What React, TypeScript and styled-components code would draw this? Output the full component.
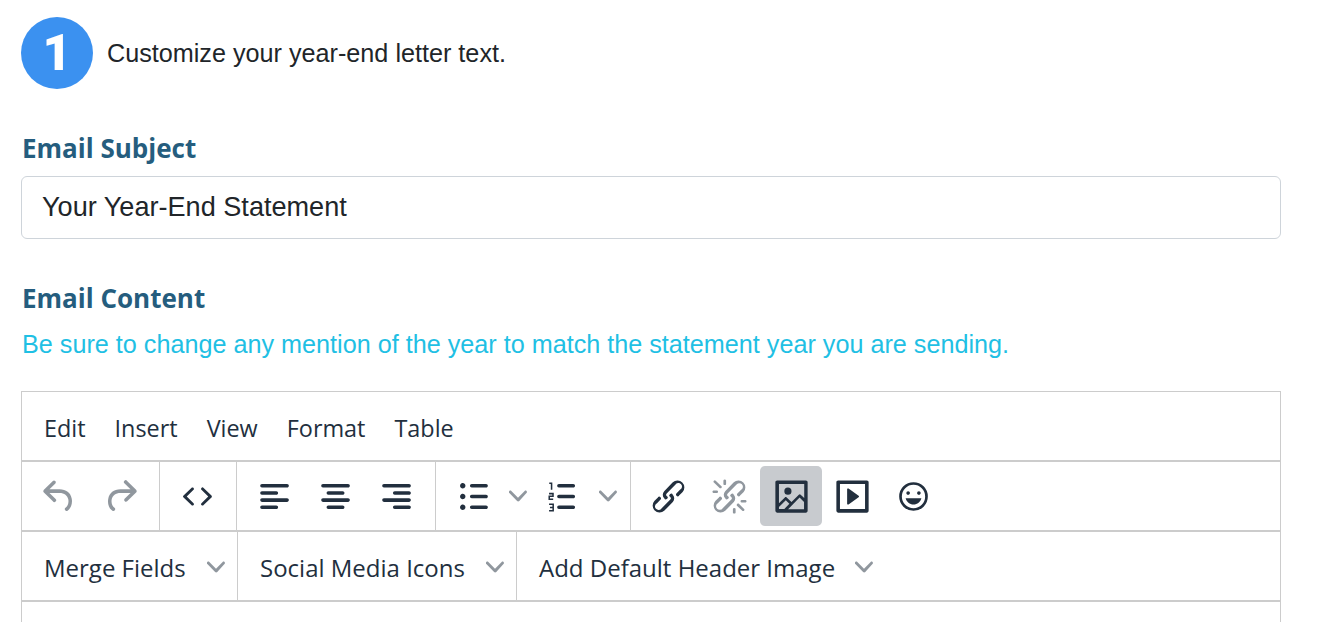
import React from 'react';
import styled, { createGlobalStyle } from 'styled-components';

const GlobalStyle = createGlobalStyle`
  html, body {
    margin: 0;
    padding: 0;
    height: 100%;
    overflow: hidden;
    background: #fff;
  }
  body {
    font-family: "Liberation Sans", Arial, sans-serif;
    color: #212529;
  }
`;

const Page = styled.div`
  width: 1260px;
  height: 622px;
  padding: 17px 0 0 21px;
  overflow: hidden;
`;

const StepRow = styled.div`
  display: flex;
  align-items: center;
  gap: 14px;
  height: 72px;
  margin-bottom: 41px;
`;

const StepBadge = styled.div`
  width: 72px;
  height: 72px;
  border-radius: 50%;
  background: #3b91f0;
  color: #fff;
  font-family: Roboto, sans-serif;
  font-size: 50px;
  font-weight: 900;
  display: flex;
  align-items: center;
  justify-content: center;
`;

const StepText = styled.div`
  font-size: 25.2px;
  color: #212529;
`;

const FieldLabel = styled.div`
  font-family: "Open Sans", sans-serif;
  font-size: 26px;
  line-height: 36px;
  font-weight: 700;
  color: #255d7e;
  padding-left: 1px;
`;

const SubjectInput = styled.div`
  box-sizing: border-box;
  width: 1260px;
  height: 63px;
  margin: 10px 0 41px;
  padding: 0 20px;
  border: 1px solid #ced4da;
  border-radius: 6px;
  font-size: 27.1px;
  line-height: 60px;
  color: #212529;
`;

const HelpText = styled.div`
  font-size: 25.2px;
  line-height: 36px;
  color: #1fc0e4;
  margin: 10px 0 29px;
  padding-left: 1px;
`;

const Editor = styled.div`
  box-sizing: border-box;
  width: 1260px;
  height: 300px;
  border: 1px solid #ccc;
  border-bottom: 0;
`;

const MenuBar = styled.div`
  display: flex;
  align-items: center;
  gap: 29px;
  height: 68px;
  padding: 3px 0 0 22px;
  box-sizing: border-box;
`;

const MenuItem = styled.span`
  font-family: "Open Sans", sans-serif;
  font-size: 23.4px;
  color: #222f3e;
`;

const ToolbarRow = styled.div<{ $height: number }>`
  display: flex;
  height: ${p => p.$height}px;
  border-top: 2px solid #ccc;
`;

const ToolGroup = styled.div`
  display: flex;
  align-items: center;
  padding: 0 8px 0 7px;
  border-right: 1px solid #ccc;

  &:last-child {
    border-right: 0;
  }
`;

const ToolButton = styled.div<{ $active?: boolean; $disabled?: boolean }>`
  width: ${p => (p.$active ? 62 : 61)}px;
  height: 60px;
  border-radius: 5px;
  display: flex;
  align-items: center;
  justify-content: center;
  background: ${p => (p.$active ? '#c8cbcf' : 'transparent')};
  color: ${p => (p.$disabled ? 'rgba(34, 47, 62, 0.5)' : '#222f3e')};

  svg {
    width: 43px;
    height: 43px;
    flex: none;
    fill: currentColor;
  }
`;

const SplitButton = styled.div`
  width: 89.5px;
  height: 60px;
  display: flex;
  align-items: center;
  padding-left: 8.5px;
  box-sizing: border-box;
  color: #222f3e;

  svg.icon {
    width: 43px;
    height: 43px;
    flex: none;
    fill: currentColor;
  }
`;

const Chevron = styled.svg`
  width: 18px;
  height: 18px;
  fill: rgba(34, 47, 62, 0.5);
  flex: none;
`;

const SplitChevron = styled(Chevron)`
  margin-left: 14.5px;
`;

const SelectButton = styled.div<{ $width: number }>`
  box-sizing: border-box;
  width: ${p => p.$width}px;
  display: flex;
  align-items: center;
  justify-content: space-between;
  padding: 2px 12px 0 22px;
  border-right: 1px solid #ccc;
  font-family: "Open Sans", sans-serif;
  font-size: 24px;
  color: #222f3e;

  &:last-child {
    border-right: 0;
  }
`;

const ICONS: Record<string, string> = {
  undo: 'M6.4 8H12c3.7 0 6.2 2 6.8 5.1.6 2.7-.4 5.6-2.3 6.8a1 1 0 0 1-1-1.8c1.1-.6 1.8-2.7 1.4-4.6-.5-2.1-2.1-3.5-4.9-3.5H6.4l3.3 3.3a1 1 0 1 1-1.4 1.4l-5-5a1 1 0 0 1 0-1.4l5-5a1 1 0 0 1 1.4 1.4L6.4 8z',
  redo: 'M17.6 10H12c-2.8 0-4.4 1.4-4.9 3.5-.4 2 .3 4 1.4 4.6a1 1 0 1 1-1 1.8c-2-1.2-2.9-4.1-2.3-6.8.6-3 3-5.1 6.8-5.1h5.6l-3.3-3.3a1 1 0 1 1 1.4-1.4l5 5a1 1 0 0 1 0 1.4l-5 5a1 1 0 0 1-1.4-1.4l3.3-3.3z',
  code: 'M9.8 15.7c.3.3.3.8 0 1-.3.4-.9.4-1.2 0l-4.4-4.1a.8.8 0 0 1 0-1.2l4.4-4.2c.3-.3.9-.3 1.2 0 .3.3.3.8 0 1.1L6 12l3.8 3.7zM14.2 15.7c-.3.3-.3.8 0 1 .4.4.9.4 1.2 0l4.4-4.1c.3-.3.3-.9 0-1.2l-4.4-4.2a.8.8 0 0 0-1.2 0c-.3.3-.3.8 0 1.1L18 12l-3.8 3.7z',
  alignLeft: 'M5 5h14c.6 0 1 .4 1 1s-.4 1-1 1H5a1 1 0 1 1 0-2zm0 4h8c.6 0 1 .4 1 1s-.4 1-1 1H5a1 1 0 1 1 0-2zm0 8h8c.6 0 1 .4 1 1s-.4 1-1 1H5a1 1 0 0 1 0-2zm0-4h14c.6 0 1 .4 1 1s-.4 1-1 1H5a1 1 0 0 1 0-2z',
  alignCenter: 'M5 5h14c.6 0 1 .4 1 1s-.4 1-1 1H5a1 1 0 1 1 0-2zm3 4h8c.6 0 1 .4 1 1s-.4 1-1 1H8a1 1 0 1 1 0-2zm0 8h8c.6 0 1 .4 1 1s-.4 1-1 1H8a1 1 0 0 1 0-2zm-3-4h14c.6 0 1 .4 1 1s-.4 1-1 1H5a1 1 0 0 1 0-2z',
  alignRight: 'M5 5h14c.6 0 1 .4 1 1s-.4 1-1 1H5a1 1 0 1 1 0-2zm6 4h8c.6 0 1 .4 1 1s-.4 1-1 1h-8a1 1 0 0 1 0-2zm0 8h8c.6 0 1 .4 1 1s-.4 1-1 1h-8a1 1 0 0 1 0-2zm-6-4h14c.6 0 1 .4 1 1s-.4 1-1 1H5a1 1 0 0 1 0-2z',
  bullets: 'M11 5h8c.6 0 1 .4 1 1s-.4 1-1 1h-8a1 1 0 0 1 0-2zm0 6h8c.6 0 1 .4 1 1s-.4 1-1 1h-8a1 1 0 0 1 0-2zm0 6h8c.6 0 1 .4 1 1s-.4 1-1 1h-8a1 1 0 0 1 0-2zM4.5 6c0-.4.1-.8.4-1 .3-.4.7-.5 1.1-.5.4 0 .8.1 1 .4.4.3.5.7.5 1.1 0 .4-.1.8-.4 1-.3.4-.7.5-1.1.5-.4 0-.8-.1-1-.4-.4-.3-.5-.7-.5-1.1zm0 6c0-.4.1-.8.4-1 .3-.4.7-.5 1.1-.5.4 0 .8.1 1 .4.4.3.5.7.5 1.1 0 .4-.1.8-.4 1-.3.4-.7.5-1.1.5-.4 0-.8-.1-1-.4-.4-.3-.5-.7-.5-1.1zm0 6c0-.4.1-.8.4-1 .3-.4.7-.5 1.1-.5.4 0 .8.1 1 .4.4.3.5.7.5 1.1 0 .4-.1.8-.4 1-.3.4-.7.5-1.1.5-.4 0-.8-.1-1-.4-.4-.3-.5-.7-.5-1.1z',
  numbers: 'M10 17h8c.6 0 1 .4 1 1s-.4 1-1 1h-8a1 1 0 0 1 0-2zm0-6h8c.6 0 1 .4 1 1s-.4 1-1 1h-8a1 1 0 0 1 0-2zm0-6h8c.6 0 1 .4 1 1s-.4 1-1 1h-8a1 1 0 1 1 0-2z',
  link: 'M6.2 12.3a1 1 0 0 1 1.4 1.4l-2 2a2 2 0 1 0 2.6 2.8l4.8-4.8a1 1 0 0 0 0-1.4 1 1 0 1 1 1.4-1.3 2.9 2.9 0 0 1 0 4L9.6 20a3.9 3.9 0 0 1-5.5-5.5l2-2zm11.6-.6a1 1 0 0 1-1.4-1.4l2-2a2 2 0 1 0-2.6-2.8L11 10.3a1 1 0 0 0 0 1.4A1 1 0 1 1 9.6 13a2.9 2.9 0 0 1 0-4L14.4 4a3.9 3.9 0 0 1 5.5 5.5l-2 2z',
  unlink: 'M6.2 12.3a1 1 0 0 1 1.4 1.4l-2.1 2a2 2 0 1 0 2.7 2.8l4.8-4.8a1 1 0 0 0 0-1.4 1 1 0 1 1 1.4-1.3 2.9 2.9 0 0 1 0 4L9.6 20a3.9 3.9 0 0 1-5.5-5.5l2-2zm11.6-.6a1 1 0 0 1-1.4-1.4l2.1-2a2 2 0 1 0-2.7-2.8L11 10.3a1 1 0 0 0 0 1.4A1 1 0 1 1 9.6 13a2.9 2.9 0 0 1 0-4L14.4 4a3.9 3.9 0 0 1 5.5 5.5l-2 2zM7.6 6.3a.8.8 0 0 1-1 1.1L3.3 4.2a.7.7 0 1 1 1-1l3.2 3.1zM5.1 8.6a.8.8 0 0 1 0 1.5H3a.8.8 0 0 1 0-1.5H5zm5-3.5a.8.8 0 0 1-1.5 0V3a.8.8 0 0 1 1.5 0v2zm6 11.8a.8.8 0 0 1 1-1l3.2 3.2a.8.8 0 0 1-1 1L16 17zm-2.2 2a.8.8 0 0 1 1.5 0V21a.8.8 0 0 1-1.5 0V19zm5-3.5a.7.7 0 1 1 0-1.5H21a.8.8 0 0 1 0 1.5h-2z',
  image: 'M5 15.7l3.3-3.2c.3-.3.7-.3 1 0L12 15l4.1-4c.3-.4.8-.4 1 0l2 1.9V5H5v10.7zM5 18V19h3l2.8-2.9-2-2L5 17.9zm14-3l-2.5-2.4-6.4 6.5H19v-4zM4 3h16c.6 0 1 .4 1 1v16c0 .6-.4 1-1 1H4a1 1 0 0 1-1-1V4c0-.6.4-1 1-1zm6 8a2 2 0 1 0 0-4 2 2 0 0 0 0 4z',
  media: 'M4 3h16c.6 0 1 .4 1 1v16c0 .6-.4 1-1 1H4a1 1 0 0 1-1-1V4c0-.6.4-1 1-1zm1 2v14h14V5H5zm4.8 2.6l5.6 4a.5.5 0 0 1 0 .8l-5.6 4A.5.5 0 0 1 9 16V8a.5.5 0 0 1 .8-.4z',
  emoji: 'M9 11c.6 0 1-.4 1-1s-.4-1-1-1a1 1 0 0 0-1 1c0 .6.4 1 1 1zm6 0c.6 0 1-.4 1-1s-.4-1-1-1a1 1 0 0 0-1 1c0 .6.4 1 1 1zm-3 5.5c2.1 0 4-1.5 4.4-3.5H7.6c.5 2 2.3 3.5 4.4 3.5zM12 4a8 8 0 1 0 0 16 8 8 0 0 0 0-16zm0 14.5a6.5 6.5 0 1 1 0-13 6.5 6.5 0 0 1 0 13z',
};

const CHEVRON = 'M8.7 2.2c.3-.3.8-.3 1 0 .4.4.4.9 0 1.2L5.7 7.8c-.3.3-.9.3-1.2 0L.2 3.4a.8.8 0 0 1 0-1.2c.3-.3.8-.3 1.1 0L5 6l3.7-3.8z';

const Icon = ({ name }: { name: string }) => (
  <svg className="icon" viewBox="0 0 24 24">
    <path d={ICONS[name]} />
    {name === 'numbers' && (
      <g fill="none" stroke="currentColor" strokeWidth="0.85">
        <path d="M4.6 4.6h1.3v3.6" />
        <path d="M4.5 10.4h2.2v1.5H4.6v1.6h2.2" />
        <path d="M4.5 16.3h2.3v3.6H4.5M5 18.1h1.8" />
      </g>
    )}
  </svg>
);

const Caret = () => (
  <Chevron viewBox="0 0 10 10">
    <path d={CHEVRON} />
  </Chevron>
);

const SplitCaret = () => (
  <SplitChevron viewBox="0 0 10 10">
    <path d={CHEVRON} />
  </SplitChevron>
);

export default function App() {
  return (
    <>
      <GlobalStyle />
      <Page>
        <StepRow>
          <StepBadge>1</StepBadge>
          <StepText>Customize your year-end letter text.</StepText>
        </StepRow>

        <FieldLabel>Email Subject</FieldLabel>
        <SubjectInput>Your Year-End Statement</SubjectInput>

        <FieldLabel>Email Content</FieldLabel>
        <HelpText>Be sure to change any mention of the year to match the statement year you are sending.</HelpText>

        <Editor>
          <MenuBar>
            {['Edit', 'Insert', 'View', 'Format', 'Table'].map(item => (
              <MenuItem key={item}>{item}</MenuItem>
            ))}
          </MenuBar>
          <ToolbarRow $height={68}>
            <ToolGroup>
              <ToolButton $disabled><Icon name="undo" /></ToolButton>
              <ToolButton $disabled><Icon name="redo" /></ToolButton>
            </ToolGroup>
            <ToolGroup>
              <ToolButton><Icon name="code" /></ToolButton>
            </ToolGroup>
            <ToolGroup>
              <ToolButton><Icon name="alignLeft" /></ToolButton>
              <ToolButton><Icon name="alignCenter" /></ToolButton>
              <ToolButton><Icon name="alignRight" /></ToolButton>
            </ToolGroup>
            <ToolGroup>
              <SplitButton><Icon name="bullets" /><SplitCaret /></SplitButton>
              <SplitButton><Icon name="numbers" /><SplitCaret /></SplitButton>
            </ToolGroup>
            <ToolGroup>
              <ToolButton><Icon name="link" /></ToolButton>
              <ToolButton $disabled><Icon name="unlink" /></ToolButton>
              <ToolButton $active><Icon name="image" /></ToolButton>
              <ToolButton><Icon name="media" /></ToolButton>
              <ToolButton><Icon name="emoji" /></ToolButton>
            </ToolGroup>
          </ToolbarRow>
          <ToolbarRow $height={68}>
            <SelectButton $width={216}>Merge Fields<Caret /></SelectButton>
            <SelectButton $width={279}>Social Media Icons<Caret /></SelectButton>
            <SelectButton $width={368}>Add Default Header Image<Caret /></SelectButton>
          </ToolbarRow>
          <ToolbarRow $height={20} />
        </Editor>
      </Page>
    </>
  );
}
